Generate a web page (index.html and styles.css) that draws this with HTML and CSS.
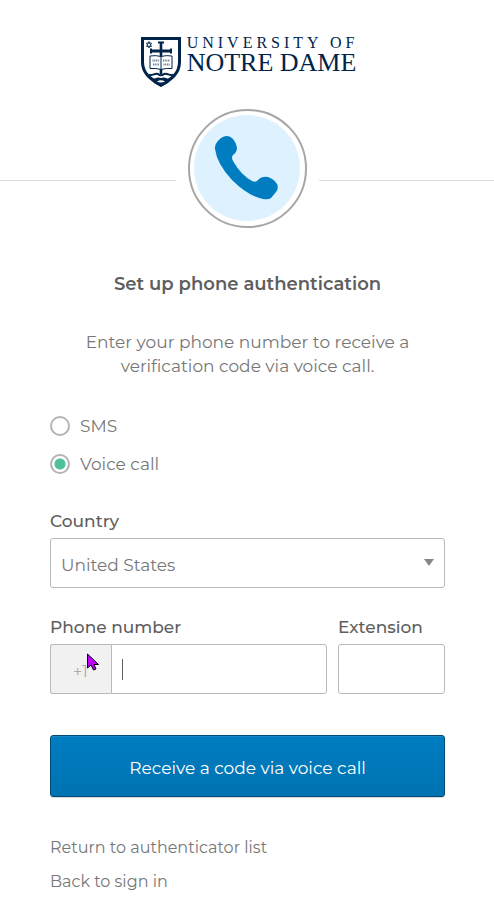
FILE: index.html
```html
<!DOCTYPE html>
<html lang="en">

<head>
    <meta charset="UTF-8">
    <meta name="viewport" content="width=device-width, initial-scale=1.0">
    <title>Set up phone authentication</title>
    <link rel="stylesheet" href="styles.css">
</head>

<body>
    <header class="logo">
        <svg class="shield" viewBox="0 0 40 50" width="40" height="50" aria-hidden="true">
            <path d="M1.500 1.500H38.500V25C38.500 36 31 42 20 48C9 42 1.500 36 1.500 25Z" fill="#fff" stroke="#00234b" stroke-width="3"/>
            <path d="M8 37.500C11 39.500 14 35.500 17 37Q20 39.500 23 37C26 35.500 29 39.500 32 37.500" fill="none" stroke="#00234b" stroke-width="2"/>
            <path d="M9 41.500C13 43 16 39 20 41C24 39 27 43 31 41.500L27 46L20 50L13 46Z" fill="#00234b"/>
            <path d="M16 44.500Q20 42 24 44.500Q20 46.500 16 44.500Z" fill="#fff"/>
            <path d="M18.700 5H21.300V37H18.700Z M10 12.500H30V15.500H10Z M17 4.500H23V6.500H17Z M9 11.500H11V16.500H9Z M29 11.500H31V16.500H29Z" fill="#00234b"/>
            <path d="M9 19Q15 18 20 19.500Q25 18 31 19V31.500Q25 31 20 32.500Q15 31 9 31.500Z" fill="#fff" stroke="#00234b"/>
            <path d="M20 19.500V32.500" stroke="#00234b"/>
            <path d="M11.500 23.500H18.500M22 23.500H29M12 27.500H18M22.500 27.500H29" stroke="#00234b" stroke-width="2" stroke-dasharray="1 .7" opacity=".6"/>
            <path d="M8 4.500L10.500 9.500H5.500ZM8 11L10.500 6H5.500Z" fill="none" stroke="#00234b" stroke-width=".8"/>
        </svg>
        <div class="logo-text">
            <span class="logo-top">UNIVERSITY OF</span>
            <span class="logo-bottom">NOTRE DAME</span>
        </div>
    </header>

    <div class="beacon-row">
        <div class="beacon">
            <svg viewBox="0 0 107 107" width="107" height="107" aria-hidden="true">
                <circle cx="53" cy="53" r="53" fill="#ddf1ff"/>
                <path d="M27 23Q33 19 38 23Q42 27 43 33Q43 37 39 40Q37 42 39 46Q47 60 58 66Q62 68 64 65Q68 61 74 62Q80 64 83 69Q85 73 82 77L77 83Q75 85 69 84Q54 81 38 65Q23 49 21 34Q20 29 27 23Z" fill="#007dc1"/>
            </svg>
        </div>
    </div>

    <main>
        <h1>Set up phone authentication</h1>
        <p class="subtitle">Enter your phone number to receive a verification code via voice call.</p>

        <form>
            <div class="radios">
                <label class="radio"><input type="radio" name="method" value="sms">SMS</label>
                <label class="radio"><input type="radio" name="method" value="call" checked>Voice call</label>
            </div>

            <label class="field-label" for="country">Country</label>
            <div class="select-wrap">
                <select id="country">
                    <option>United States</option>
                </select>
            </div>

            <div class="number-row">
                <div class="phone">
                    <label class="field-label" for="phone">Phone number</label>
                    <div class="phone-box">
                        <span class="prefix">+1
                            <svg class="pointer" viewBox="0 0 12 18" width="12" height="18" aria-hidden="true">
                                <path d="M.5 1V15L4 12L6.500 17L9 16L7 11.500H11.500Z" fill="#bf00ff" stroke="#000"/>
                            </svg>
                        </span>
                        <input type="text" id="phone">
                        <span class="caret"></span>
                    </div>
                </div>
                <div class="extension">
                    <label class="field-label" for="extension">Extension</label>
                    <input type="text" id="extension">
                </div>
            </div>

            <button type="button" class="submit">Receive a code via voice call</button>
        </form>

        <nav class="links">
            <a href="#">Return to authenticator list</a>
            <a href="#">Back to sign in</a>
        </nav>
    </main>
</body>

</html>
```

FILE: styles.css
```css
* {
    box-sizing: border-box;
}

body {
    margin: 0;
    background-color: #fff;
    color: #777;
    font-family: Montserrat, Inter, "Open Sans", sans-serif;
    font-size: 17px;
    font-weight: 400;
    line-height: 24px;
}

.logo {
    display: flex;
    justify-content: center;
    align-items: flex-end;
    gap: 6px;
    padding: 35px 0 0 3px;
    color: #00234b;
    font-family: "Liberation Serif", serif;
}

.logo-text {
    display: flex;
    flex-direction: column;
    padding-bottom: 11px;
}

.logo-top {
    font-size: 16px;
    line-height: 15px;
    letter-spacing: 4px;
    margin-right: -4px;
}

.logo-bottom {
    font-size: 26px;
    line-height: 26px;
}

.beacon-row {
    display: flex;
    gap: 12px;
    margin-top: 22px;
}

/* lines on both sides of the circle */
.beacon-row::before,
.beacon-row::after {
    content: "";
    flex: 1;
    height: 1px;
    margin-top: 71px;
    background-color: #ddd;
}

.beacon {
    display: flex;
    padding: 4px;
    border: 2px solid #a7a7a7;
    border-radius: 50%;
}

main {
    padding: 0 49px 12px 50px;
}

h1 {
    margin: 44px 0 34px;
    color: #5e5e5e;
    font-size: 18px;
    font-weight: 600;
    text-align: center;
}

.subtitle {
    max-width: 350px;
    margin: 0 auto 36px;
    text-align: center;
}

.radios {
    display: flex;
    flex-direction: column;
    gap: 14px;
    margin-bottom: 33px;
}

.radio {
    display: flex;
    align-items: center;
    gap: 10px;
}

.radio input {
    appearance: none;
    width: 20px;
    height: 20px;
    margin: 0;
    border: 2px solid #b4b4b4;
    border-radius: 50%;
}

.radio input:checked {
    background: radial-gradient(circle, #4cbf9c 5px, #fff 6px);
}

.field-label {
    display: block;
    margin-bottom: 5px;
    color: #5e5e5e;
    font-weight: 500;
}

select,
input[type="text"] {
    width: 100%;
    height: 50px;
    padding: 4px 10px 0;
    border: 1px solid #b9b9b9;
    border-radius: 3px;
    background-color: #fff;
    color: #777;
    font: inherit;
    outline: none;
}

select {
    appearance: none;
}

.select-wrap {
    position: relative;
    margin-bottom: 27px;
}

.select-wrap::after {
    content: "";
    position: absolute;
    top: 21px;
    right: 11px;
    border: 5px solid transparent;
    border-top: 7px solid #888;
    border-bottom: 0;
    pointer-events: none;
}

.number-row {
    display: flex;
    gap: 11px;
    margin-bottom: 41px;
}

.phone {
    flex: 277;
}

.extension {
    flex: 107;
}

.phone-box {
    position: relative;
    display: flex;
}

.prefix {
    position: relative;
    flex: none;
    width: 61px;
    padding: 15px 0 0 22px;
    border: 1px solid #b9b9b9;
    border-right: 0;
    border-radius: 3px 0 0 3px;
    background-color: #f1f1f1;
    color: #aaa;
    font-size: 16px;
}

.pointer {
    position: absolute;
    top: 8px;
    left: 36px;
}

.phone-box input {
    min-width: 0;
    border-radius: 0 3px 3px 0;
}

.caret {
    position: absolute;
    top: 15px;
    left: 72px;
    width: 1px;
    height: 21px;
    background-color: #5e5e5e;
}

.submit {
    display: block;
    width: 100%;
    height: 62px;
    padding: 4px 10px 0;
    border: 1px solid #004b75;
    border-radius: 3px;
    background: linear-gradient(#007dc1, #0073b2);
    box-shadow: 0 1px 0 #d8d8d8, inset 0 1px 0 #1a89c8;
    color: #fff;
    font: inherit;
}

.links {
    display: flex;
    flex-direction: column;
    align-items: flex-start;
    gap: 10px;
    margin-top: 39px;
    font-size: 16px;
}

.links a {
    color: #777;
    text-decoration: none;
}
```
